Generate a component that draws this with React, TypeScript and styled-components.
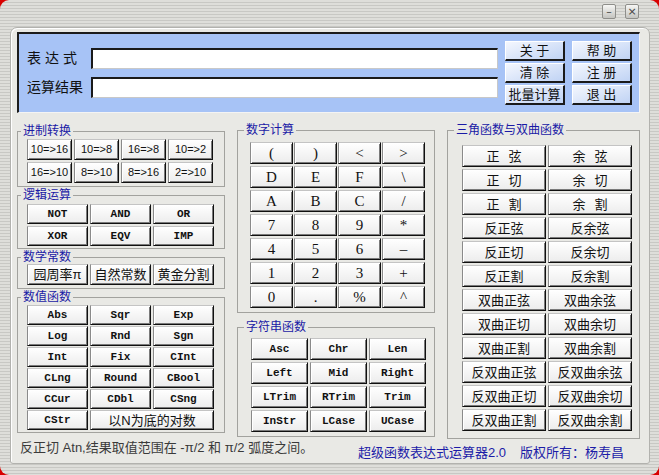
import styled, { createGlobalStyle } from "styled-components";

const CJK = `"Liberation Sans", "Noto Sans CJK SC", sans-serif`;

const GlobalStyle = createGlobalStyle`
  html, body {
    margin: 0;
    padding: 0;
  }
  body {
    background: #d80000;
    width: 659px;
    height: 475px;
    overflow: hidden;
    font-family: ${CJK};
  }
`;

const Window = styled.div`
  width: 659px;
  height: 475px;
  box-sizing: border-box;
  border-radius: 9px;
  background: repeating-linear-gradient(to bottom, #dededa 0 2px, #c8c8c4 2px 3px);
  display: flex;
  flex-direction: column;
`;

const TitleBar = styled.div`
  height: 27px;
  box-sizing: border-box;
  display: flex;
  justify-content: flex-end;
  align-items: flex-start;
  gap: 9px;
  padding: 4px 20px 0 0;
`;

const CaptionButton = styled.div`
  width: 14px;
  height: 15px;
  box-sizing: border-box;
  border: 1px solid #8e8e8a;
  border-radius: 2px;
  background: linear-gradient(#f6f6f4, #c4c4c0);
  display: flex;
  align-items: center;
  justify-content: center;
  font: 11px/1 "DejaVu Sans", sans-serif;
  color: #444;
`;

const Client = styled.div`
  margin: 0 9px 0 10px;
  height: 437px;
  box-sizing: border-box;
  background: #e9e9e5;
  border: 1px solid #b2b2ae;
  border-radius: 7px 7px 3px 3px;
  box-shadow: inset 1px 1px 0 #fff;
  padding: 4px 9px 0 6px;
  display: flex;
  flex-direction: column;
`;

const TopPanel = styled.div`
  height: 81px;
  box-sizing: border-box;
  background: #a7c3f6;
  border-top: 2px solid #1c1c1c;
  border-left: 2px solid #1c1c1c;
  border-right: 1px solid #f4f4f4;
  border-bottom: 1px solid #f4f4f4;
  display: flex;
  align-items: center;
  gap: 7px;
  padding-left: 8px;
`;

const Fields = styled.div`
  display: grid;
  grid-template-columns: 64px 407px;
  grid-auto-rows: 21px;
  row-gap: 8px;
  align-items: center;
`;

const FieldLabel = styled.span<{ $spread?: boolean }>`
  font: 14px/21px ${CJK};
  color: #111;
  letter-spacing: ${(p) => (p.$spread ? "4px" : "0")};
`;

const Field = styled.input`
  height: 21px;
  box-sizing: border-box;
  margin: 0;
  background: #fff;
  border-style: solid;
  border-width: 2px 1px 1px 2px;
  border-color: #1a1a1a #c8c8c8 #c8c8c8 #1a1a1a;
  outline: none;
`;

const TopButtons = styled.div`
  display: grid;
  grid-template-columns: 60px 60px;
  grid-auto-rows: 20px;
  column-gap: 7px;
  row-gap: 2px;
`;

const BlueButton = styled.button`
  margin: 0;
  padding: 0;
  box-sizing: border-box;
  background: linear-gradient(160deg, #f4f7fe 0%, #c0d3f4 100%);
  border-style: solid;
  border-width: 1px 2px 2px 1px;
  border-color: #ffffff #1a1a1a #1a1a1a #ffffff;
  font: 13px/16px ${CJK};
  color: #111;
  white-space: pre;
`;

const Main = styled.div`
  display: grid;
  grid-template-columns: 208px 198px 193px;
  column-gap: 12px;
  align-items: start;
  margin-top: 10px;
`;

const Column = styled.div<{ $top?: number }>`
  display: flex;
  flex-direction: column;
  padding-top: ${(p) => p.$top ?? 0}px;
`;

const Group = styled.fieldset<{ $gap?: number }>`
  margin: ${(p) => p.$gap ?? 0}px 0 0 0;
  padding: 0;
  min-width: 0;
  border: 1px solid #a2a29e;
`;

const Legend = styled.legend<{ $offset?: number }>`
  margin-left: ${(p) => p.$offset ?? 3}px;
  padding: 0 2px;
  font: 12px/14px ${CJK};
  color: #1a1aa6;
`;

const ButtonGrid = styled.div<{
  $cols: string;
  $rowH: number;
  $colGap: number;
  $rowGap: number;
  $margin: string;
}>`
  display: grid;
  grid-template-columns: ${(p) => p.$cols};
  grid-auto-rows: ${(p) => p.$rowH}px;
  column-gap: ${(p) => p.$colGap}px;
  row-gap: ${(p) => p.$rowGap}px;
  margin: ${(p) => p.$margin};
`;

type Face = "mono" | "serif" | "sans" | "cjk";

const faceFont: Record<Face, string> = {
  mono: `bold 11px/13px "Liberation Mono", monospace`,
  serif: `15px/16px "Liberation Serif", serif`,
  sans: `11px/13px "Liberation Sans", sans-serif`,
  cjk: `13px/15px ${CJK}`,
};

const KeyButton = styled.button<{ $face: Face; $span?: number; $spaced?: boolean }>`
  margin: 0;
  padding: 0 0 0 ${(p) => (p.$spaced ? "9px" : "0")};
  box-sizing: border-box;
  grid-column: span ${(p) => p.$span ?? 1};
  background: linear-gradient(#ffffff, #ececec);
  border-style: solid;
  border-width: 1px;
  border-color: #c4c4c4 #101010 #101010 #8a8a8a;
  box-shadow: inset 1px 1px 0 #fff, inset -1px -1px 0 #7a7a7a;
  font: ${(p) => faceFont[p.$face]};
  letter-spacing: ${(p) => (p.$spaced ? "9px" : "0")};
  color: #111;
  white-space: pre;
`;

const StatusRow = styled.div`
  display: flex;
  justify-content: space-between;
  align-items: flex-start;
  padding: 0 16px 0 3px;
  margin-top: 1px;
`;

const Hint = styled.span`
  font: 13px/15px ${CJK};
  color: #3a3a3a;
`;

const Credit = styled.span`
  font: 13px/15px ${CJK};
  color: #1c1ca8;
  padding-top: 5px;

  span + span {
    margin-left: 14px;
  }
`;

const topButtons = ["关 于", "帮 助", "清 除", "注 册", "批量计算", "退 出"];
const radix = ["10=>16", "10=>8", "16=>8", "10=>2", "16=>10", "8=>10", "8=>16", "2=>10"];
const logic = ["NOT", "AND", "OR", "XOR", "EQV", "IMP"];
const constants = ["园周率π", "自然常数", "黄金分割"];
const numeric = [
  "Abs", "Sqr", "Exp", "Log", "Rnd", "Sgn", "Int", "Fix", "CInt",
  "CLng", "Round", "CBool", "CCur", "CDbl", "CSng", "CStr",
];
const digits = [
  "(", ")", "<", ">", "D", "E", "F", "\\", "A", "B", "C", "/",
  "7", "8", "9", "*", "4", "5", "6", "–", "1", "2", "3", "+", "0", ".", "%", "^",
];
const strings = ["Asc", "Chr", "Len", "Left", "Mid", "Right", "LTrim", "RTrim", "Trim", "InStr", "LCase", "UCase"];
const trig = [
  "正弦", "余弦", "正切", "余切", "正割", "余割",
  "反正弦", "反余弦", "反正切", "反余切", "反正割", "反余割",
  "双曲正弦", "双曲余弦", "双曲正切", "双曲余切", "双曲正割", "双曲余割",
  "反双曲正弦", "反双曲余弦", "反双曲正切", "反双曲余切", "反双曲正割", "反双曲余割",
];

export default function App() {
  return (
    <>
      <GlobalStyle />
      <Window>
        <TitleBar>
          <CaptionButton>–</CaptionButton>
          <CaptionButton>×</CaptionButton>
        </TitleBar>
        <Client>
          <TopPanel>
            <Fields>
              <FieldLabel $spread>表达式</FieldLabel>
              <Field readOnly value="" />
              <FieldLabel>运算结果</FieldLabel>
              <Field readOnly value="" />
            </Fields>
            <TopButtons>
              {topButtons.map((t) => (
                <BlueButton key={t}>{t}</BlueButton>
              ))}
            </TopButtons>
          </TopPanel>

          <Main>
            <Column $top={1}>
              <Group>
                <Legend>进制转换</Legend>
                <ButtonGrid $cols="repeat(4, 45px)" $rowH={21} $colGap={2} $rowGap={2} $margin="1px 0 3px 9px">
                  {radix.map((t) => (
                    <KeyButton key={t} $face="sans">{t}</KeyButton>
                  ))}
                </ButtonGrid>
              </Group>
              <Group $gap={1}>
                <Legend>逻辑运算</Legend>
                <ButtonGrid $cols="repeat(3, 61px)" $rowH={20} $colGap={2} $rowGap={2} $margin="2px 0 2px 9px">
                  {logic.map((t) => (
                    <KeyButton key={t} $face="mono">{t}</KeyButton>
                  ))}
                </ButtonGrid>
              </Group>
              <Group $gap={1}>
                <Legend>数学常数</Legend>
                <ButtonGrid $cols="repeat(3, 61px)" $rowH={21} $colGap={2} $rowGap={2} $margin="0 0 3px 9px">
                  {constants.map((t) => (
                    <KeyButton key={t} $face="cjk">{t}</KeyButton>
                  ))}
                </ButtonGrid>
              </Group>
              <Group $gap={1}>
                <Legend>数值函数</Legend>
                <ButtonGrid $cols="repeat(3, 61px)" $rowH={20} $colGap={2} $rowGap={1} $margin="1px 0 2px 9px">
                  {numeric.map((t) => (
                    <KeyButton key={t} $face="mono">{t}</KeyButton>
                  ))}
                  <KeyButton $face="cjk" $span={2}>以N为底的对数</KeyButton>
                </ButtonGrid>
              </Group>
            </Column>

            <Column>
              <Group>
                <Legend $offset={6}>数字计算</Legend>
                <ButtonGrid $cols="repeat(4, 43px)" $rowH={22} $colGap={1} $rowGap={2} $margin="5px 0 4px 12px">
                  {digits.map((t) => (
                    <KeyButton key={t} $face="serif">{t}</KeyButton>
                  ))}
                </ButtonGrid>
              </Group>
              <Group $gap={7}>
                <Legend $offset={6}>字符串函数</Legend>
                <ButtonGrid $cols="repeat(3, 57px)" $rowH={22} $colGap={2} $rowGap={2} $margin="4px 0 4px 13px">
                  {strings.map((t) => (
                    <KeyButton key={t} $face="mono">{t}</KeyButton>
                  ))}
                </ButtonGrid>
              </Group>
            </Column>

            <Column>
              <Group>
                <Legend $offset={6}>三角函数与双曲函数</Legend>
                <ButtonGrid $cols="repeat(2, 84px)" $rowH={22} $colGap={2} $rowGap={2} $margin="8px 0 7px 14px">
                  {trig.map((t) => (
                    <KeyButton key={t} $face="cjk" $spaced={t.length === 2}>{t}</KeyButton>
                  ))}
                </ButtonGrid>
              </Group>
            </Column>
          </Main>

          <StatusRow>
            <Hint>反正切 Atn,结果取值范围在 -π/2 和 π/2 弧度之间。</Hint>
            <Credit>
              <span>超级函数表达式运算器2.0</span>
              <span>版权所有：杨寿昌</span>
            </Credit>
          </StatusRow>
        </Client>
      </Window>
    </>
  );
}
